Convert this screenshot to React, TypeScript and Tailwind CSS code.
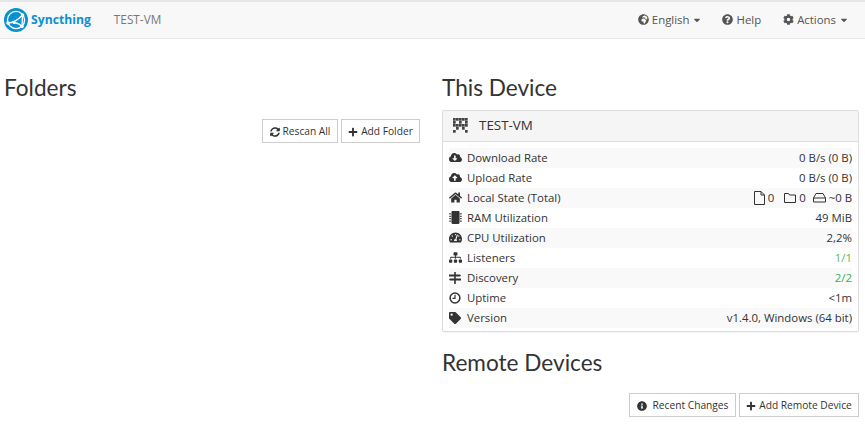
import type { ReactNode } from "react";
import {
  FaCaretDown,
  FaCloudDownloadAlt,
  FaCloudUploadAlt,
  FaCog,
  FaGlobeAfrica,
  FaHome,
  FaInfoCircle,
  FaMicrochip,
  FaPlus,
  FaQuestionCircle,
  FaSitemap,
  FaSyncAlt,
  FaTachometerAlt,
  FaTag,
} from "react-icons/fa";

const body = "font-['Open_Sans','Noto_Sans',sans-serif]";
const heading = "font-['Lato',sans-serif]";

function Logo() {
  return (
    <svg width="24" height="24" viewBox="0 0 24 24" className="shrink-0">
      <circle cx="12" cy="12" r="12" fill="#0891d1" />
      <circle cx="12" cy="12" r="8.6" fill="none" stroke="#fff" strokeWidth="1.3" />
      <path d="M3.5 15 C9 15 14 12 18.5 7 M10 14.5 C13 15 16.5 16 18 19 M18.5 7 L18 19" fill="none" stroke="#fff" strokeWidth="1.3" />
      <circle cx="18.5" cy="7" r="1.8" fill="#fff" />
      <circle cx="18" cy="18.5" r="1.8" fill="#fff" />
      <circle cx="4" cy="15" r="1.8" fill="#fff" />
      <circle cx="10" cy="14.5" r="1.5" fill="#fff" />
    </svg>
  );
}

// the little pixel identicon in the panel heading
function Identicon() {
  const cells = [
    [1, 1, 1, 1, 1],
    [1, 0, 1, 0, 1],
    [1, 1, 1, 1, 1],
    [0, 1, 0, 1, 0],
    [1, 0, 0, 0, 1],
  ];
  return (
    <svg width="15" height="15" viewBox="0 0 15 15" className="shrink-0">
      {cells.flatMap((row, y) =>
        row.map((on, x) =>
          on ? <rect key={`${x}-${y}`} x={x * 3} y={y * 3} width="2.7" height="2.7" fill="#444" /> : null,
        ),
      )}
    </svg>
  );
}

// outline icons, the font awesome 5 ones are too heavy for these
const FileIcon = () => (
  <svg width="11" height="14" viewBox="0 0 11 14" className="mr-[3px]" fill="none" stroke="#333">
    <path d="M.5.5h6.5l3.5 3.5v9.500h-10z M7 .5v3.500h3.500" />
  </svg>
);
const FolderIcon = () => (
  <svg width="12" height="11" viewBox="0 0 12 11" className="ml-[10px] mr-[3px]" fill="none" stroke="#333">
    <path d="M.5 1.500h4l1 1.500h6v7.500h-11z" />
  </svg>
);
const DriveIcon = () => (
  <svg width="13" height="11" viewBox="0 0 13 11" className="ml-[7px] mr-[3px]" fill="none" stroke="#333">
    <path d="M3 1.500h7l2.500 4.500v4h-12v-4z M.5 6h12" />
  </svg>
);
const SignsIcon = () => (
  <svg width="12" height="12" viewBox="0 0 12 12" fill="#333">
    <rect x="5.200" y="0" width="1.600" height="12" />
    <path d="M0 2.500h11l1 1-1 1h-11z" />
    <path d="M12 6.500h-11l-1 1 1 1h11z" />
  </svg>
);
const ClockIcon = () => (
  <svg width="12" height="12" viewBox="0 0 12 12" fill="none" stroke="#333">
    <circle cx="6" cy="6" r="4.900" strokeWidth="1.500" />
    <path d="M6 2.800v3.500h-2.500" strokeWidth="1.200" />
  </svg>
);

function NavItem({ icon, label, caret, className }: { icon: ReactNode; label: string; caret?: boolean; className?: string }) {
  return (
    <div className={`flex items-center gap-[3px] text-[11.4px] text-[#555] ${className ?? ""}`}>
      {icon}
      <span>{label}</span>
      {caret && <FaCaretDown className="text-[10px]" />}
    </div>
  );
}

function Btn({ icon, label, className }: { icon: ReactNode; label: string; className?: string }) {
  return (
    <div
      className={`flex h-6 items-center justify-center gap-[3px] border border-[#ccc] bg-white pt-px text-[10.2px] text-[#333] ${className ?? ""}`}
    >
      {icon}
      <span>{label}</span>
    </div>
  );
}

const rows: { icon: ReactNode; label: string; value: ReactNode }[] = [
  { icon: <FaCloudDownloadAlt />, label: "Download Rate", value: "0 B/s (0 B)" },
  { icon: <FaCloudUploadAlt />, label: "Upload Rate", value: "0 B/s (0 B)" },
  {
    icon: <FaHome />,
    label: "Local State (Total)",
    value: (
      <span className="flex items-center">
        <FileIcon />0
        <FolderIcon />0
        <DriveIcon />~0 B
      </span>
    ),
  },
  { icon: <FaMicrochip />, label: "RAM Utilization", value: "49 MiB" },
  { icon: <FaTachometerAlt />, label: "CPU Utilization", value: "2,2%" },
  { icon: <FaSitemap />, label: "Listeners", value: <span className="text-[#5cb85c]">1/1</span> },
  { icon: <SignsIcon />, label: "Discovery", value: <span className="text-[#2fb45a]">2/2</span> },
  { icon: <ClockIcon />, label: "Uptime", value: "<1m" },
  { icon: <FaTag className="text-[12px]" />, label: "Version", value: "v1.4.0, Windows (64 bit)" },
];

export default function App() {
  return (
    <div className={`h-[425px] w-[865px] overflow-hidden bg-white ${body}`}>
      <nav className="flex h-[39px] items-center border-b border-t-2 border-b-[#e7e7e7] border-t-[#e7e7e7] bg-[#f8f8f8] pl-[4px] pr-[16px]">
        <Logo />
        <span className="ml-[3px] text-[12.2px] font-bold text-[#0891d1]">Syncthing</span>
        <span className="ml-[23px] text-[11.8px] text-[#777]">TEST-VM</span>
        <div className="ml-auto flex items-center gap-[20px]">
          <NavItem icon={<FaGlobeAfrica className="text-[11px]" />} label="English" caret />
          <NavItem icon={<FaQuestionCircle className="text-[11px]" />} label="Help" />
          <NavItem icon={<FaCog className="text-[11px]" />} label="Actions" caret className="ml-[2px]" />
        </div>
      </nav>

      <div className="flex pl-[4px] pr-[6px]">
        <section className="w-[416px] shrink-0">
          <h1 className={`mt-[36px] text-[22.6px] leading-[26px] text-[#333] ${heading}`}>Folders</h1>
          <div className="mt-[18px] flex justify-end gap-[3px]">
            <Btn icon={<FaSyncAlt className="text-[10px]" />} label="Rescan All" className="w-[76px]" />
            <Btn icon={<FaPlus className="text-[10px]" />} label="Add Folder" className="w-[79px]" />
          </div>
        </section>

        <section className="ml-[22px] flex-1">
          <h1 className={`mt-[36px] text-[22.6px] leading-[26px] text-[#333] ${heading}`}>This Device</h1>
          <div className="mt-[9px] rounded-[2px] border border-[#ddd] shadow-[0_1px_1px_rgba(0,0,0,0.05)]">
            <div className="flex h-[31px] items-center border-b border-[#ddd] bg-[#f5f5f5] pb-[2px] pl-[10px] text-[13.4px] text-[#333]">
              <Identicon />
              <span className="ml-[11px]">TEST-VM</span>
            </div>
            <div className="px-[6px] pb-[3px] pt-[6px]">
              {rows.map((row, i) => (
                <div
                  key={row.label}
                  className={`flex h-5 items-center justify-between text-[11.4px] text-[#333] ${i % 2 === 0 ? "bg-[#f9f9f9]" : ""}`}
                >
                  <span className="flex items-center">
                    <span className="flex w-[18px] justify-start text-[13px]">{row.icon}</span>
                    {row.label}
                  </span>
                  {row.value}
                </div>
              ))}
            </div>
          </div>

          <h1 className={`mt-[18px] text-[22.6px] leading-[26px] text-[#333] ${heading}`}>Remote Devices</h1>
          <div className="mt-[17px] flex justify-end gap-[3px]">
            <Btn icon={<FaInfoCircle className="mr-[3px] text-[10px]" />} label="Recent Changes" className="w-[107px]" />
            <Btn icon={<FaPlus className="text-[10px]" />} label="Add Remote Device" className="w-[120px]" />
          </div>
        </section>
      </div>
    </div>
  );
}
